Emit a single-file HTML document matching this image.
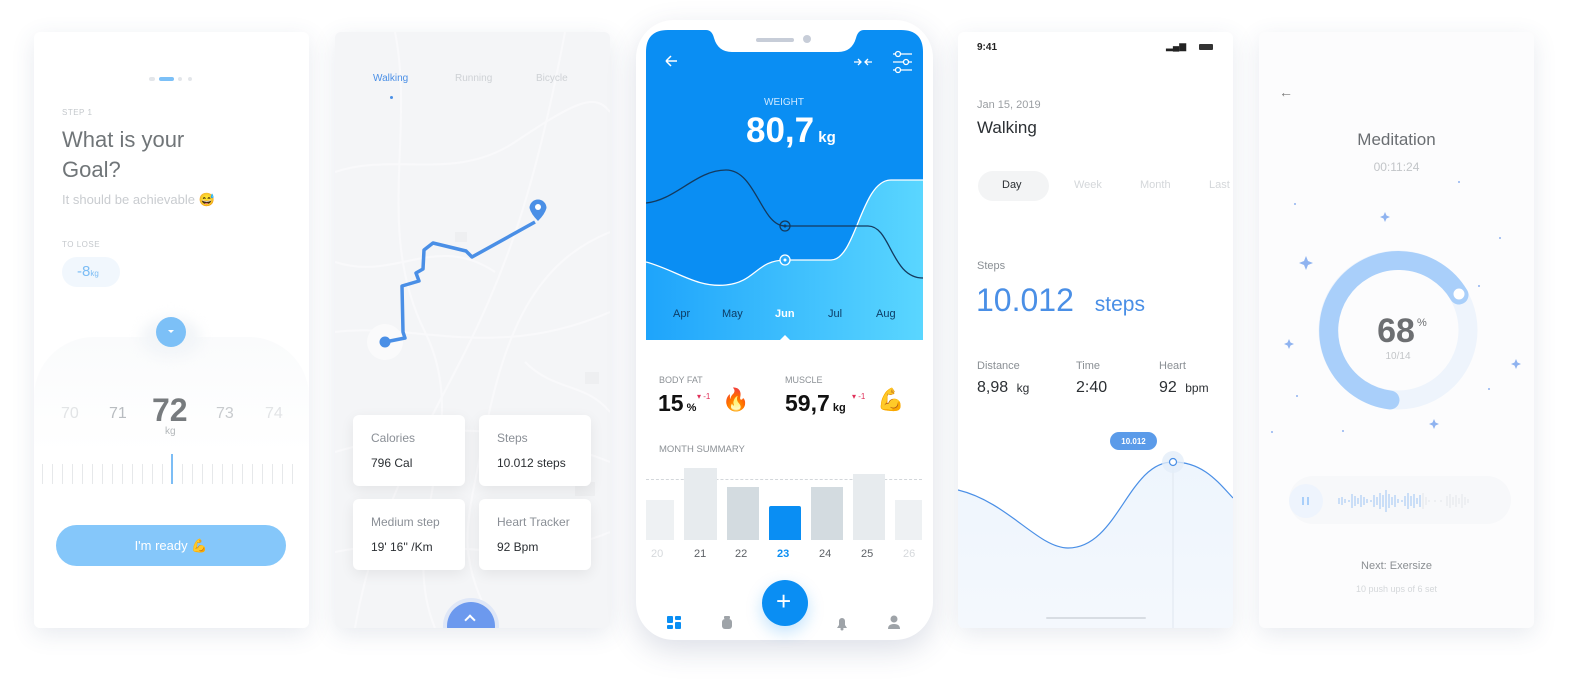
<!DOCTYPE html>
<html><head><meta charset="utf-8"><style>
*{margin:0;padding:0;box-sizing:border-box}
body{width:1570px;height:692px;background:#fff;position:relative;overflow:hidden;font-family:"Liberation Sans",sans-serif}
.a{position:absolute}
.card{position:absolute;top:32px;width:275px;height:596px;background:#fff;border-radius:6px;box-shadow:0 6px 24px rgba(60,80,120,.12);overflow:hidden}
.t{position:absolute;white-space:nowrap}
.tile{position:absolute;width:112px;height:71px;background:#fff;border-radius:6px;box-shadow:0 4px 14px rgba(0,0,0,.07)}
.tile .l{position:absolute;left:18px;top:16px;font-size:12px;color:#8a8f96}
.tile .v{position:absolute;left:18px;top:41px;font-size:12px;color:#2b2f33}
</style></head><body>

<!-- CARD 1 -->
<div class="card" style="left:34px">
 <div class="a" style="left:115px;top:45px;width:6px;height:4px;border-radius:2px;background:#e3e6ea"></div>
 <div class="a" style="left:125px;top:45px;width:15px;height:4px;border-radius:2px;background:#7cc0f7"></div>
 <div class="a" style="left:144px;top:45px;width:4px;height:4px;border-radius:2px;background:#e3e6ea"></div>
 <div class="a" style="left:154px;top:45px;width:4px;height:4px;border-radius:2px;background:#e3e6ea"></div>
 <div class="t" style="left:28px;top:76px;font-size:8px;color:#c4c8cc;letter-spacing:.5px">STEP 1</div>
 <div class="t" style="left:28px;top:93px;font-size:22px;line-height:30px;color:#707578">What is your<br>Goal?</div>
 <div class="t" style="left:28px;top:160px;font-size:13px;color:#c9ccd0">It should be achievable 😅</div>
 <div class="t" style="left:28px;top:208px;font-size:8px;color:#c4c8cc;letter-spacing:.5px">TO LOSE</div>
 <div class="a" style="left:28px;top:225px;width:58px;height:30px;border-radius:15px;background:#f1f7fd"></div>
 <div class="t" style="left:43px;top:231px;font-size:15px;color:#7cbdf5">-8<span style="font-size:8px">kg</span></div>
 <div class="a" style="left:0;top:305px;width:275px;height:291px;background:linear-gradient(#fafbfc,#fff 40%);border-radius:60px 60px 0 0"></div>
 <div class="a" style="left:107px;top:285px;width:60px;height:40px;border-radius:50%;background:#f2f5f8;filter:blur(6px)"></div>
 <div class="a" style="left:122px;top:285px;width:30px;height:30px;border-radius:50%;background:#7cc0f7"></div>
 <div class="a" style="left:134px;top:298px;border-left:3px solid transparent;border-right:3px solid transparent;border-top:3px solid #fff"></div>
 <div class="t" style="left:27px;top:373px;font-size:16px;color:#e2e4e6">70</div>
 <div class="t" style="left:75px;top:373px;font-size:16px;color:#b8bcc0">71</div>
 <div class="t" style="left:118px;top:360px;font-size:32px;font-weight:bold;color:#777b7e">72</div>
 <div class="t" style="left:131px;top:394px;font-size:10px;color:#b3b7ba">kg</div>
 <div class="t" style="left:182px;top:373px;font-size:16px;color:#c8cbce">73</div>
 <div class="t" style="left:231px;top:373px;font-size:16px;color:#e2e4e6">74</div>
 <div class="a" style="left:8px;top:432px;width:260px;height:20px;background:repeating-linear-gradient(90deg,#e6e8ea 0 1px,transparent 1px 10px)"></div>
 <div class="a" style="left:137px;top:422px;width:2px;height:30px;background:#7cbdf5"></div>
 <div class="a" style="left:22px;top:493px;width:230px;height:41px;border-radius:21px;background:#85c7fa;color:#fff;font-size:13px;text-align:center;line-height:41px">I'm ready 💪</div>
</div>

<!-- CARD 2 map -->
<div class="card" style="left:335px;background:#f4f5f7">
 <svg class="a" style="left:0;top:0" width="275" height="596">
  <g fill="none" stroke="#fbfbfc" stroke-width="2" opacity=".8">
   <path d="M0 140 C60 120 120 150 180 110 S260 60 275 80"/>
   <path d="M20 596 C40 480 90 400 130 320 S200 160 230 0"/>
   <path d="M0 300 C80 290 160 330 275 280"/>
   <path d="M0 420 C70 400 150 380 275 430"/>
   <path d="M60 0 C80 100 40 200 90 300 S60 500 100 596"/>
   <path d="M275 200 C200 230 170 300 150 400 S120 520 160 596"/>
   <path d="M0 230 C60 250 100 200 160 240"/>
   <path d="M190 330 C220 360 250 350 275 380"/>
   <path d="M0 520 C100 500 180 540 275 500"/>
  </g>
  <g fill="#eeeff1"><rect x="120" y="200" width="12" height="10"/><rect x="250" y="340" width="14" height="12"/><rect x="240" y="450" width="20" height="14"/><rect x="30" y="470" width="18" height="12"/></g>
  <circle cx="50" cy="310" r="18" fill="#fafafb"/>
  <polyline points="50,310 70,306 68,300 67,254 84,249 81,241 88,237 89,218 98,211 131,219 137,225 200,190" fill="none" stroke="#4a8fe6" stroke-width="3.5" stroke-linejoin="round"/>
  <circle cx="50" cy="310" r="5.5" fill="#4a8fe6"/>
  <path d="M194.5 176 A8.5 8.5 0 1 1 211.5 176 Q210 182 203 189 Q196 182 194.5 176Z" fill="#4a8fe6"/>
  <circle cx="203" cy="175" r="3" fill="#fff"/>
 </svg>
 <div class="t" style="left:38px;top:41px;font-size:10px;color:#4a8fe6">Walking</div>
 <div class="a" style="left:55px;top:64px;width:3px;height:3px;border-radius:50%;background:#4a8fe6"></div>
 <div class="t" style="left:120px;top:41px;font-size:10px;color:#ced1d5">Running</div>
 <div class="t" style="left:201px;top:41px;font-size:10px;color:#ced1d5">Bicycle</div>
 <div class="tile" style="left:18px;top:383px"><div class="l">Calories</div><div class="v">796 Cal</div></div>
 <div class="tile" style="left:144px;top:383px"><div class="l">Steps</div><div class="v">10.012 steps</div></div>
 <div class="tile" style="left:18px;top:467px"><div class="l">Medium step</div><div class="v">19' 16'' /Km</div></div>
 <div class="tile" style="left:144px;top:467px"><div class="l">Heart Tracker</div><div class="v">92 Bpm</div></div>
 <div class="a" style="left:112px;top:570px;width:48px;height:48px;border-radius:50%;background:#6c99ee;box-shadow:0 0 0 4px #dfe7f7"></div>
 <div class="a" style="left:131px;top:584px;width:8px;height:8px;border-left:2px solid #fff;border-top:2px solid #fff;transform:rotate(45deg)"></div>
</div>

<!-- PHONE -->
<div class="a" style="left:636px;top:20px;width:297px;height:620px;background:#fff;border-radius:38px;box-shadow:0 10px 30px rgba(60,80,120,.18)"></div>
<svg class="a" style="left:646px;top:30px" width="277" height="320">
 <defs><linearGradient id="g1" x1="0" y1="0" x2="1" y2="0"><stop offset="0" stop-color="#1ea4fb"/><stop offset="1" stop-color="#5ad6ff"/></linearGradient>
 <clipPath id="c1"><path d="M0 22 Q0 0 22 0 H60 Q66 0 68 8 Q72 22 86 22 H192 Q206 22 210 8 Q212 0 218 0 H255 Q277 0 277 22 V310 H0Z"/></clipPath></defs>
 <g clip-path="url(#c1)">
  <rect width="277" height="320" fill="#0a8ef3"/>
  <path d="M0 232 C30 240 50 258 80 255 S110 230 140 230 H185 C210 230 215 150 245 150 H277 V320 H0Z" fill="url(#g1)"/>
  <path d="M0 232 C30 240 50 258 80 255 S110 230 140 230 H185 C210 230 215 150 245 150 H277" fill="none" stroke="#fff" stroke-width="1.3"/>
  <path d="M0 173 C30 170 50 140 80 140 C110 140 115 196 139 196 H222 C245 196 245 248 277 248" fill="none" stroke="#143a5e" stroke-width="1.3"/>
  <circle cx="139" cy="196" r="5" fill="none" stroke="#143a5e" stroke-width="1.3"/><circle cx="139" cy="196" r="1.5" fill="#143a5e"/>
  <circle cx="139" cy="230" r="5" fill="#2aaafc" stroke="#fff" stroke-width="1.3"/><circle cx="139" cy="230" r="1.5" fill="#fff"/>
 </g>
 <rect x="110" y="8" width="38" height="4" rx="2" fill="#c7cdd8"/><circle cx="161" cy="9" r="4" fill="#c7cdd8"/>
 <path d="M20 31 H31 M20 31 L25 26 M20 31 L25 36" stroke="#fff" stroke-width="1.5" fill="none"/>
 <path d="M208 32 H215 M212 29 L215 32 L212 35 M226 32 H219 M222 29 L219 32 L222 35" stroke="#fff" stroke-width="1.3" fill="none"/>
 <g stroke="#fff" stroke-width="1.3" fill="none"><path d="M247 24 H266 M247 32 H266 M247 40 H266"/><circle cx="252" cy="24" r="2.5" fill="#0a8ef3"/><circle cx="260" cy="32" r="2.5" fill="#0a8ef3"/><circle cx="252" cy="40" r="2.5" fill="#0a8ef3"/></g>
 <path d="M134 310 L139 305 L144 310Z" fill="#fff"/>
</svg>
<div class="t" style="left:764px;top:97px;font-size:10px;color:#cfe9ff">WEIGHT</div>
<div class="t" style="left:746px;top:111px;font-size:35px;font-weight:bold;color:#fff">80,7<span style="font-size:15px"> kg</span></div>
<div class="t" style="left:673px;top:308px;font-size:11px;color:#0d3c66">Apr</div>
<div class="t" style="left:722px;top:308px;font-size:11px;color:#0d3c66">May</div>
<div class="t" style="left:775px;top:308px;font-size:11px;color:#fff;font-weight:bold">Jun</div>
<div class="t" style="left:828px;top:308px;font-size:11px;color:#0d3c66">Jul</div>
<div class="t" style="left:876px;top:308px;font-size:11px;color:#0d3c66">Aug</div>
<div class="t" style="left:659px;top:375px;font-size:9px;color:#8c9196">BODY FAT</div>
<div class="t" style="left:658px;top:390px;font-size:23px;font-weight:bold;color:#111">15<span style="font-size:11px"> %</span></div>
<div class="t" style="left:697px;top:392px;font-size:8px;color:#e0305a">▾ -1</div>
<div class="t" style="left:722px;top:387px;font-size:22px">🔥</div>
<div class="t" style="left:785px;top:375px;font-size:9px;color:#8c9196">MUSCLE</div>
<div class="t" style="left:785px;top:390px;font-size:23px;font-weight:bold;color:#111">59,7<span style="font-size:11px"> kg</span></div>
<div class="t" style="left:852px;top:392px;font-size:8px;color:#e0305a">▾ -1</div>
<div class="t" style="left:877px;top:387px;font-size:22px">💪</div>
<div class="t" style="left:659px;top:444px;font-size:9.5px;color:#8c9196">MONTH SUMMARY</div>
<div class="a" style="left:646px;top:479px;width:276px;border-top:1px dashed #d3d7db"></div>
<div class="a" style="left:646px;top:500px;width:28px;height:40px;background:#eef1f3"></div>
<div class="a" style="left:684px;top:468px;width:33px;height:72px;background:#e7ebee"></div>
<div class="a" style="left:727px;top:487px;width:32px;height:53px;background:#d3dbe0"></div>
<div class="a" style="left:769px;top:506px;width:32px;height:34px;background:#0a8ef3;border-radius:2px 2px 0 0"></div>
<div class="a" style="left:811px;top:487px;width:32px;height:53px;background:#d3dbe0"></div>
<div class="a" style="left:853px;top:474px;width:32px;height:66px;background:#e7ebee"></div>
<div class="a" style="left:895px;top:500px;width:27px;height:40px;background:#eef1f3"></div>
<div class="t" style="left:651px;top:548px;font-size:11px;color:#d6d9dc">20</div>
<div class="t" style="left:694px;top:548px;font-size:11px;color:#5d6166">21</div>
<div class="t" style="left:735px;top:548px;font-size:11px;color:#5d6166">22</div>
<div class="t" style="left:777px;top:548px;font-size:11px;color:#0a8ef3;font-weight:bold">23</div>
<div class="t" style="left:819px;top:548px;font-size:11px;color:#5d6166">24</div>
<div class="t" style="left:861px;top:548px;font-size:11px;color:#5d6166">25</div>
<div class="t" style="left:903px;top:548px;font-size:11px;color:#d6d9dc">26</div>
<div class="a" style="left:762px;top:580px;width:46px;height:46px;border-radius:50%;background:#0a8ef3;box-shadow:0 6px 16px rgba(10,142,243,.25)"></div>
<div class="t" style="left:776px;top:586px;font-size:26px;color:#fff;line-height:30px">+</div>
<svg class="a" style="left:666px;top:615px" width="240" height="16">
 <g fill="#0a8ef3"><rect x="1" y="1" width="6" height="7" rx="1"/><rect x="9" y="1" width="6" height="4" rx="1"/><rect x="1" y="10" width="6" height="4" rx="1"/><rect x="9" y="7" width="6" height="7" rx="1"/></g>
 <g fill="#9ea3a8"><rect x="56" y="4" width="10" height="10" rx="3"/><rect x="58" y="1" width="6" height="3" rx="1"/>
 <path d="M171 13 H181 L179 10 V6 A3 3 0 0 0 173 6 V10Z"/><circle cx="176" cy="14" r="1.5"/>
 <circle cx="228" cy="4" r="3.5"/><path d="M222 14 Q222 9 228 9 Q234 9 234 14Z"/></g>
</svg>

<!-- CARD 4 -->
<div class="card" style="left:958px">
 <div class="t" style="left:19px;top:10px;font-size:10px;color:#222;font-weight:bold">9:41</div>
 <div class="t" style="left:208px;top:9px;font-size:9px;color:#222">▂▄▆</div>
 <div class="a" style="left:241px;top:12px;width:14px;height:6px;border-radius:1px;background:#333"></div>
 <div class="t" style="left:19px;top:67px;font-size:11px;color:#9a9ea2">Jan 15, 2019</div>
 <div class="t" style="left:19px;top:86px;font-size:17px;color:#2b2f33">Walking</div>
 <div class="a" style="left:20px;top:139px;width:71px;height:30px;border-radius:15px;background:#f3f4f5"></div>
 <div class="t" style="left:44px;top:147px;font-size:11px;color:#2b2f33">Day</div>
 <div class="t" style="left:116px;top:147px;font-size:11px;color:#d4d7da">Week</div>
 <div class="t" style="left:182px;top:147px;font-size:11px;color:#d4d7da">Month</div>
 <div class="t" style="left:251px;top:147px;font-size:11px;color:#d4d7da">Last</div>
 <div class="t" style="left:19px;top:228px;font-size:11px;color:#8a8f94">Steps</div>
 <div class="t" style="left:18px;top:250px;font-size:32px;color:#4a8fe6">10.012 <span style="font-size:21px;margin-left:12px">steps</span></div>
 <div class="t" style="left:19px;top:328px;font-size:11px;color:#8a8f94">Distance</div>
 <div class="t" style="left:118px;top:328px;font-size:11px;color:#8a8f94">Time</div>
 <div class="t" style="left:201px;top:328px;font-size:11px;color:#8a8f94">Heart</div>
 <div class="t" style="left:19px;top:347px;font-size:16px;color:#2b2f33">8,98 <span style="font-size:12px;margin-left:4px">kg</span></div>
 <div class="t" style="left:118px;top:347px;font-size:16px;color:#2b2f33">2:40</div>
 <div class="t" style="left:201px;top:347px;font-size:16px;color:#2b2f33">92 <span style="font-size:12px;margin-left:4px">bpm</span></div>
 <svg class="a" style="left:0;top:0" width="275" height="596">
  <defs><linearGradient id="g4" x1="0" y1="0" x2="0" y2="1"><stop offset="0" stop-color="#eef5fd"/><stop offset="1" stop-color="#f4f8fd"/></linearGradient></defs>
  <path d="M0 458 C50 470 80 516 110 516 C160 516 170 430 215 430 C245 430 260 450 275 466 V596 H0Z" fill="url(#g4)"/>
  <path d="M0 458 C50 470 80 516 110 516 C160 516 170 430 215 430 C245 430 260 450 275 466" fill="none" stroke="#4a8fe6" stroke-width="1.2"/>
  <line x1="215" y1="430" x2="215" y2="596" stroke="#dfe6ef"/>
  <circle cx="215" cy="430" r="11" fill="#e3edf9" opacity=".8"/>
  <circle cx="215" cy="430" r="3.5" fill="#fff" stroke="#4a8fe6" stroke-width="1.2"/>
  <rect x="152" y="400" width="47" height="18" rx="9" fill="#5b9be9"/>
  <text x="175.5" y="412" font-size="8" font-weight="bold" fill="#fff" text-anchor="middle" font-family="Liberation Sans">10.012</text>
  <rect x="88" y="585" width="100" height="2" rx="1" fill="#d8dde3"/>
 </svg>
</div>

<!-- CARD 5 -->
<div class="card" style="left:1259px;background:#fcfcfd">
 <div class="t" style="left:20px;top:52px;font-size:14px;color:#777">←</div>
 <div class="t" style="left:0;width:275px;text-align:center;top:98px;font-size:17px;color:#6a6e72">Meditation</div>
 <div class="t" style="left:0;width:275px;text-align:center;top:128px;font-size:12px;color:#c2c5c8">00:11:24</div>
 <svg class="a" style="left:0;top:0" width="275" height="596">
  <circle cx="139" cy="298" r="70" fill="none" stroke="#eef4fc" stroke-width="19"/>
  <path d="M131 368 A70 70 0 1 1 200 263" fill="none" stroke="#a9cffa" stroke-width="19" stroke-linecap="round"/>
  <circle cx="200" cy="262" r="6.5" fill="#fff" stroke="#a9cffa" stroke-width="2"/>
  <g fill="#8fb3f0"><path d="M47 224 l2 5 5 2 -5 2 -2 5 -2 -5 -5 -2 5 -2z"/><path d="M126 180 l1.5 3.5 3.5 1.5 -3.5 1.5 -1.5 3.5 -1.5 -3.5 -3.5 -1.5 3.5 -1.5z"/><path d="M30 307 l1.5 3.5 3.5 1.5 -3.5 1.5 -1.5 3.5 -1.5 -3.5 -3.5 -1.5 3.5 -1.5z"/><path d="M257 327 l1.5 3.5 3.5 1.5 -3.5 1.5 -1.5 3.5 -1.5 -3.5 -3.5 -1.5 3.5 -1.5z"/><path d="M175 387 l1.5 3.5 3.5 1.5 -3.5 1.5 -1.5 3.5 -1.5 -3.5 -3.5 -1.5 3.5 -1.5z"/>
  <circle cx="36" cy="172" r="1"/><circle cx="241" cy="206" r="1"/><circle cx="38" cy="364" r="1"/><circle cx="230" cy="357" r="1"/><circle cx="13" cy="400" r="1"/><circle cx="84" cy="399" r="1"/><circle cx="220" cy="254" r="1"/><circle cx="200" cy="150" r="1"/></g>
  <text x="137" y="310" font-size="34" font-weight="bold" fill="#6d6f72" text-anchor="middle" font-family="Liberation Sans">68</text>
  <text x="158" y="294" font-size="11" fill="#6d6f72" font-family="Liberation Sans">%</text>
  <text x="139" y="327" font-size="10" fill="#c2c5c8" text-anchor="middle" font-family="Liberation Sans">10/14</text>
  <rect x="30" y="444" width="222" height="48" rx="24" fill="#f7f8fa"/>
  <circle cx="47" cy="469" r="17" fill="#eef4fd"/>
  <rect x="43" y="465" width="2" height="8" fill="#a9cffa"/><rect x="48" y="465" width="2" height="8" fill="#a9cffa"/>
  <g stroke="#9cc3f4" stroke-width="1">
   <path d="M80 466v6M83 465v8M86 467v4M90 468v2M93 462v14M96 464v10M99 466v6M102 463v12M105 465v8M108 467v4M112 468v2M115 463v12M118 465v8M121 461v16M124 463v12M127 458v22M130 462v14M133 465v8M136 463v12M139 467v4M143 468v2M146 464v10M149 461v16M152 464v10M155 462v14M158 466v6M161 463v12"/>
  </g>
  <g stroke="#e3e6ea" stroke-width="1"><path d="M164 461v16M167 465v8M170 468v2M176 468v2M182 468v2M188 464v10M191 462v14M194 465v8M197 463v12M200 466v6M203 462v14M206 465v8M209 467v4"/></g>
 </svg>
 <div class="t" style="left:0;width:275px;text-align:center;top:528px;font-size:11px;color:#8a8e92">Next: Exersize</div>
 <div class="t" style="left:0;width:275px;text-align:center;top:552px;font-size:9px;color:#d4d7da">10 push ups of 6 set</div>
</div>
</body></html>
